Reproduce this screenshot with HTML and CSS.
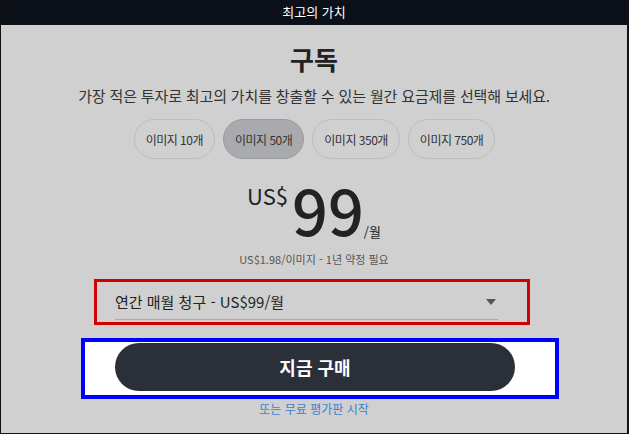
FILE: index.html
```html
<!DOCTYPE html>
<html lang="ko">
<head>
    <meta charset="UTF-8">
    <meta name="viewport" content="width=device-width, initial-scale=1.0">
    <title>구독</title>
    <link rel="stylesheet" href="styles.css">
</head>
<body>

    <div class="frame">
        <div class="top-bar">최고의 가치</div>

        <h1 class="title">구독</h1>
        <p class="subtitle">가장 적은 투자로 최고의 가치를 창출할 수 있는 월간 요금제를 선택해 보세요.</p>

        <!-- 이미지 수 선택 -->
        <div class="pill-row">
            <button class="pill">이미지 10개</button>
            <button class="pill active">이미지 50개</button>
            <button class="pill">이미지 350개</button>
            <button class="pill">이미지 750개</button>
        </div>

        <div class="price">
            <span class="currency">US$</span>
            <span class="amount">99</span>
            <span class="per">/월</span>
        </div>
        <p class="price-note">US$1.98/이미지 - 1년 약정 필요</p>

        <div class="plan-outline">
            <div class="plan-select">
                <span>연간 매월 청구 - US$99/월</span>
                <span class="arrow"></span>
            </div>
        </div>

        <div class="buy-outline">
            <button class="buy-btn">지금 구매</button>
        </div>

        <a class="trial-link" href="#">또는 무료 평가판 시작</a>
    </div>

</body>
</html>
```

FILE: styles.css
```css
body {
    margin: 0;
    font-family: 'Noto Sans CJK KR', 'Noto Sans', sans-serif;
    color: #222;
}
.frame {
    width: 629px;
    height: 434px;
    box-sizing: border-box;
    border: 1px solid #111;
    border-top: none;
    border-right-width: 2px;
    background-color: #d0d0d0;
    display: flex;
    flex-direction: column;
    align-items: center;
}
.top-bar {
    align-self: stretch;
    height: 25px;
    line-height: 24px;
    background-color: #0c1019;
    color: #fff;
    font-size: 13px;
    text-align: center;
}
.title {
    margin: 17px 0 0;
    font-size: 26px;
    line-height: 34px;
    font-weight: bold;
    color: #222;
}
.subtitle {
    margin: 9px 0 0;
    font-size: 15px;
    line-height: 22px;
    letter-spacing: -0.15px;
    color: #333;
}
.pill-row {
    display: flex;
    gap: 8px;
    margin-top: 12px;
    margin-left: 1px;
}
.pill {
    height: 40px;
    padding: 0 11px;
    border: 1px solid #bdbdbd;
    border-radius: 20px;
    background: transparent;
    font-family: inherit;
    font-size: 12px;
    letter-spacing: -0.5px;
    color: #333;
    cursor: pointer;
}
.pill.active {
    background-color: #a9aaae;
    border-color: #9a9a9e;
}
.price {
    display: flex;
    height: 60px;
    margin-top: 18px;
    margin-left: 0;
}
.currency {
    font-size: 22px;
    line-height: 30px;
    margin-top: 3px;
}
.amount {
    font-size: 63px;
    line-height: 64px;
    font-weight: 500;
    margin-left: 4px;
}
.per {
    align-self: flex-end;
    font-size: 13px;
    line-height: 16px;
    margin-left: 0;
    margin-bottom: -3px;
}
.price-note {
    margin: 14px 0 0;
    font-size: 11px;
    line-height: 16px;
    color: #555;
}
.plan-outline {
    align-self: flex-start;
    margin: 12px 0 0 93px;
    width: 436px;
    height: 46px;
    box-sizing: border-box;
    border: 3px solid #d10000;
    padding: 0 29px 2px 18px;
    display: flex;
}
.plan-select {
    flex: 1;
    display: flex;
    align-items: center;
    justify-content: space-between;
    border-bottom: 1px solid #aaa;
    font-size: 15px;
    color: #222;
    padding-top: 2px;
}
.arrow {
    width: 0;
    height: 0;
    margin-right: 2px;
    border-left: 5px solid transparent;
    border-right: 5px solid transparent;
    border-top: 6px solid #555;
}
.buy-outline {
    align-self: flex-start;
    margin: 13px 0 0 80px;
    width: 478px;
    height: 61px;
    box-sizing: border-box;
    border: 4px solid #0000ff;
    background-color: #fff;
    padding: 1px 0 0 30px;
}
.buy-btn {
    width: 400px;
    height: 48px;
    border: none;
    border-radius: 24px;
    background-color: #2b2f38;
    color: #fff;
    font-family: inherit;
    font-size: 18px;
    font-weight: bold;
    cursor: pointer;
}
.trial-link {
    margin-top: 2px;
    font-size: 12px;
    line-height: 16px;
    color: #3a7fd0;
    text-decoration: none;
}
```
